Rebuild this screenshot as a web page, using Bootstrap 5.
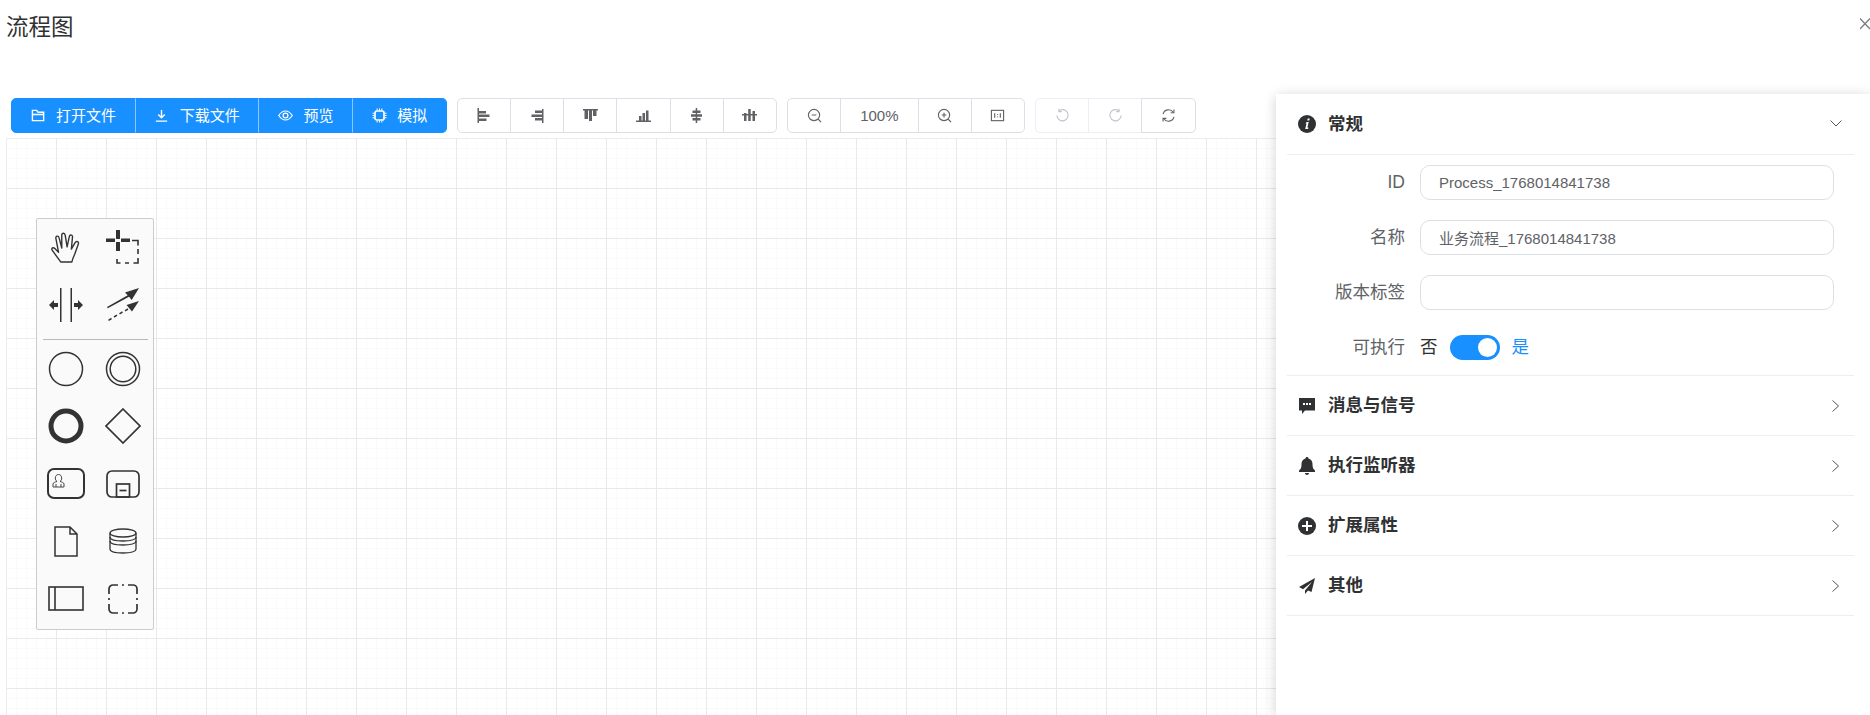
<!DOCTYPE html>
<html lang="zh-CN">
<head>
    <meta charset="UTF-8">
    <title>流程图</title>
    <link href="https://cdn.jsdelivr.net/npm/bootstrap@5.3.0/dist/css/bootstrap.min.css" rel="stylesheet">
    <style>
        html, body {
            height: 715px;
            overflow: hidden;
        }
        body {
            font-family: "Liberation Sans", "Noto Sans CJK SC", sans-serif;
            background: #fff;
            color: #303133;
        }
        .page-title {
            font-size: 22.5px;
            font-weight: 400;
            line-height: 30px;
            margin: 0;
            padding: 13px 0 0 6px;
            height: 98px;
        }
        .close-x {
            position: absolute;
            top: 18px;
            right: 0;
        }
        .tool-row {
            height: 35px;
            padding-left: 11px;
            gap: 10px;
        }
        .tool-row .btn {
            font-size: 15px;
            line-height: 33px;
            height: 35px;
            padding: 0;
            width: 54.2px;
            color: #606266;
            background: #fff;
            border-color: #dcdfe6;
            border-radius: 5px;
            flex: none;
            display: flex;
            align-items: center;
            justify-content: center;
        }
        .tool-row .btn.zoom-val { width: 78.5px; }
        .tool-row .btn.is-off { color: #c0c4cc; border-color: #ebeef5; opacity: 1; }
        .tool-row .btn-primary.main-btn {
            width: auto;
            padding: 0 18.6px;
            color: #fff;
            background: #1890ff;
            border-color: #1890ff;
            border-left-color: #8cc8ff;
            gap: 10.5px;
        }
        .tool-row .btn-primary.main-btn:first-child { border-left-color: #1890ff; }
        .tool-row svg { display: block; }
        .flow-canvas {
            margin: 5px 0 0 6px;
            height: 577px;
            border-top: 1px solid #ececec;
            border-left: 1px solid #ececec;
            background-color: #fff;
            background-image:
                linear-gradient(to right, #e9e9e9 1px, transparent 1px),
                linear-gradient(to bottom, #e9e9e9 1px, transparent 1px),
                linear-gradient(to right, #fafafa 1px, transparent 1px),
                linear-gradient(to bottom, #fafafa 1px, transparent 1px);
            background-size: 50px 50px, 50px 50px, 10px 10px, 10px 10px;
            background-position: -1px -1px;
            position: relative;
        }
        .palette-box {
            position: absolute;
            left: 29px;
            top: 79px;
            width: 118px;
            height: 412px;
            background: #fafafa;
            border: 1px solid #ccc;
            border-radius: 2px;
            padding: 0 1px 0 0;
        }
        .palette-grid {
            display: grid;
            grid-template-columns: 57.5px 57.5px;
            justify-content: center;
            grid-auto-rows: 57.5px;
        }
        .palette-cell {
            display: flex;
            align-items: center;
            justify-content: center;
        }
        .palette-sep {
            border: 0;
            border-top: 1px solid #b9b9b9;
            opacity: 1;
            margin: 5px 4px 0 6px;
        }
        .side-panel {
            position: absolute;
            left: 1276px;
            top: 94px;
            width: 594px;
            height: 621px;
            background: #fff;
            box-shadow: 0 2px 12px rgba(0, 0, 0, .18);
            padding: 0 16px 0 11px;
        }
        .panel-head {
            height: 60px;
            border-bottom: 1px solid #ebeef5;
            font-size: 17.5px;
            font-weight: 700;
            color: #303133;
            padding: 0 15px 0 11px;
            gap: 12px;
        }
        .panel-head .head-arrow { margin-left: auto; }
        .head-first { height: 60.5px; padding-right: 12px; }
        .panel-body {
            height: 221.5px;
            border-bottom: 1px solid #ebeef5;
            padding-top: 10px;
        }
        .prop-row {
            height: 35px;
            margin-bottom: 20px;
        }
        .switch-row { margin-top: 1px; }
        .prop-label {
            width: 118px;
            flex: none;
            text-align: right;
            font-size: 17.5px;
            color: #606266;
            margin-right: 15px;
        }
        .prop-input {
            width: 414px;
            height: 35px;
            font-size: 15px;
            color: #606266;
            padding: 0 18px;
            border-color: #dcdfe6;
            border-radius: 10px;
        }
        .switch-word { font-size: 17.5px; color: #303133; }
        .switch-word.on { color: #1890ff; }
        .switch-track {
            width: 50px;
            height: 25px;
            border-radius: 13px;
            background: #1890ff;
            margin: 0 12px;
            position: relative;
            flex: none;
        }
        .switch-track::after {
            content: "";
            position: absolute;
            top: 3px;
            right: 3px;
            width: 19px;
            height: 19px;
            border-radius: 50%;
            background: #fff;
        }
    </style>
</head>
<body>
    <h1 class="page-title">流程图</h1>
    <svg class="close-x" width="10" height="12" viewBox="0 0 10 12"><path d="M0 .5 10 11M0 11 10 .5" stroke="#7b7d83" stroke-width="1.3" fill="none"/></svg>

    <div class="tool-row d-flex">
        <div class="btn-group">
            <button class="btn btn-primary main-btn"><svg width="15" height="15" viewBox="0 0 16 16" fill="none" stroke="#fff" stroke-width="1.5"><path d="M1.5 13.5V2.5h4.5l1.5 2h6v9z M1.5 7h12"/></svg>打开文件</button>
            <button class="btn btn-primary main-btn"><svg width="15" height="15" viewBox="0 0 16 16" fill="none" stroke="#fff" stroke-width="1.5"><path d="M8 2v8M4.5 7 8 10.5 11.5 7M2 14h12"/></svg>下载文件</button>
            <button class="btn btn-primary main-btn"><svg width="15" height="15" viewBox="0 0 16 16" fill="none" stroke="#fff" stroke-width="1.3"><path d="M.8 8C3 4.6 5.4 3.2 8 3.2s5 1.4 7.2 4.8C13 11.4 10.6 12.8 8 12.8S3 11.4.8 8z"/><circle cx="8" cy="8" r="2.6"/></svg>预览</button>
            <button class="btn btn-primary main-btn"><svg width="15" height="15" viewBox="0 0 16 16" fill="none" stroke="#fff" stroke-width="1.800"><rect x="3.200" y="3.200" width="9.600" height="9.600" rx="2"/><path d="M5.500 .5v2M8 .5v2M10.500 .5v2M5.500 13.500v2M8 13.500v2M10.500 13.500v2M.5 5.500h2M.5 8h2M.5 10.500h2M13.500 5.500h2M13.500 8h2M13.500 10.500h2" stroke-width="1.100"/></svg>模拟</button>
        </div>
        <div class="btn-group">
            <button class="btn"><svg width="15" height="15" viewBox="0 0 15 15" fill="#606266"><path d="M1.500 0H3v15H1.500zM3 3h7v2.500H3zM3 6.500h10.500V9H3zM3 10.500h7.500V13H3z"/></svg></button>
            <button class="btn"><svg width="15" height="15" viewBox="0 0 15 15" fill="#606266"><path d="M12 1h1.500v14H12zM5 2.500h7V5H5zM1.500 6.500H12V9H1.500zM5 10h7v2.500H5z"/></svg></button>
            <button class="btn"><svg width="15" height="15" viewBox="0 0 15 15" fill="#606266"><path d="M0 1h15v1.500H0zM1.500 2.500H5V11H1.500zM6 2.500h3v10.500H6zM10 2.500h3.500V8H10z"/></svg></button>
            <button class="btn"><svg width="15" height="15" viewBox="0 0 15 15" fill="#606266"><path d="M0 12.500h15V14H0zM3 8h2.500v4.500H3zM6.500 5H9v7.500H6.500zM10 2.500h2.500v10H10z"/></svg></button>
            <button class="btn"><svg width="15" height="15" viewBox="0 0 15 15" fill="#606266"><path d="M6.700 0h1.500v15H6.700zM3.500 2.500h8V5h-8zM2 6.200h11v2.500H2zM3.500 10h8v2.500h-8z"/></svg></button>
            <button class="btn"><svg width="15" height="15" viewBox="0 0 15 15" fill="#606266"><path d="M0 6h15v1.500H0zM2 5h2.500v8H2zM6.200 1h2.500v12H6.200zM10.500 3H13v10h-2.500z"/></svg></button>
        </div>
        <div class="btn-group">
            <button class="btn"><svg width="15" height="15" viewBox="0 0 16 16" fill="none" stroke="#606266" stroke-width="1.200"><circle cx="7.500" cy="7.500" r="6"/><path d="M12 12l3 3M5 7.500h5"/></svg></button>
            <button class="btn zoom-val">100%</button>
            <button class="btn"><svg width="15" height="15" viewBox="0 0 16 16" fill="none" stroke="#606266" stroke-width="1.200"><circle cx="7.500" cy="7.500" r="6"/><path d="M12 12l3 3M5 7.500h5M7.500 5v5"/></svg></button>
            <button class="btn"><svg width="15" height="15" viewBox="0 0 16 16" fill="none" stroke="#606266" stroke-width="1.200"><rect x="1.500" y="2.500" width="13" height="11"/><path d="M5 5.500v5M11 5.500v5M8 6.500v.8M8 9v.8"/></svg></button>
        </div>
        <div class="btn-group">
            <button class="btn is-off"><svg width="15" height="15" viewBox="0 0 16 16" fill="none" stroke="#c0c4cc" stroke-width="1.200"><path d="M4 3.200A6 6 0 1 1 2 8M4.200 .8v3h3"/></svg></button>
            <button class="btn is-off"><svg width="15" height="15" viewBox="0 0 16 16" fill="none" stroke="#c0c4cc" stroke-width="1.200"><path d="M12 3.200A6 6 0 1 0 14 8M11.800 .8v3h-3"/></svg></button>
            <button class="btn"><svg width="15" height="15" viewBox="0 0 16 16" fill="none" stroke="#606266" stroke-width="1.200"><path d="M2.200 6.500A6 6 0 0 1 13 4.500M13.800 9.500A6 6 0 0 1 3 11.500"/><path d="M13.800 1.500v3.500h-3.500M2.200 14.500V11h3.500"/></svg></button>
        </div>
    </div>

    <div class="flow-canvas">
        <div class="palette-box">
            <div class="palette-grid">
                <div class="palette-cell"><svg width="31" height="31" viewBox="2 3 27 29" fill="none" stroke="#333" stroke-width="1.300" stroke-linejoin="round" stroke-linecap="round"><path d="M11 31 3 20c-1-2 1-3 2.500-1.500L9 22 6.500 9c-.5-2.500 2.500-3 3-.5L12 18 12 6c0-2.500 3-2.500 3.200 0L17 17 19 7.500c.5-2.500 3.500-2 3 .5L21 19l3.500-6c1.200-2 3.800-.8 3 1.200L24 24c-1 2-2 4-2.500 7z"/></svg></div>
                <div class="palette-cell"><svg width="36" height="36" viewBox="0 0 36 36" fill="#333"><path d="M11 0h4v9h-4zM11 12h4v9h-4zM1 8.500h9v3.500H1zM16 8.500h9v3.500h-9z"/><path d="M27 10.500h6v5M33 19v5M33 28v5h-4.500M24 33h-4M15.500 33H12v-4" fill="none" stroke="#333" stroke-width="1.600"/></svg></div>
                <div class="palette-cell"><svg width="36" height="36" viewBox="0 0 36 36" fill="#333"><path d="M12 1h1.500v34H12zM22.500 1H24v34h-1.500z"/><path d="M1 18l5-5v3h4v4H6v3zM35 18l-5-5v3h-4v4h4v3z"/></svg></div>
                <div class="palette-cell"><svg width="36" height="36" viewBox="0 0 36 36" fill="#333"><path d="M34 1 20 5.500l2.700 2.800L2 20l.8 1.300L24 9.800l2.700 3.200z"/><path d="M34 14l-12.500 4 5.500 6.500z"/><path d="M23 22l-3 1.800M17.500 25l-3 1.800M12 28.200l-3 1.800M6.500 31.500l-3 1.800" stroke="#333" stroke-width="1.500"/></svg></div>
            </div>
            <hr class="palette-sep">
            <div class="palette-grid">
                <div class="palette-cell"><svg width="36" height="36" viewBox="0 0 36 36" fill="none" stroke="#333" stroke-width="1.500"><circle cx="18" cy="18" r="16.500"/></svg></div>
                <div class="palette-cell"><svg width="36" height="36" viewBox="0 0 36 36" fill="none" stroke="#333" stroke-width="1.500"><circle cx="18" cy="18" r="16.500"/><circle cx="18" cy="18" r="12.800"/></svg></div>
                <div class="palette-cell"><svg width="36" height="36" viewBox="0 0 36 36" fill="none" stroke="#333" stroke-width="5"><circle cx="18" cy="18" r="15"/></svg></div>
                <div class="palette-cell"><svg width="36" height="36" viewBox="0 0 36 36" fill="none" stroke="#333" stroke-width="1.700"><path d="M18 1 35 18 18 35 1 18z"/></svg></div>
                <div class="palette-cell"><svg width="38" height="31" viewBox="0 0 38 31" fill="none" stroke="#333"><rect x="1" y="1" width="36" height="29" rx="6" stroke-width="2"/><path d="M6 19v-3c0-1.500 2.500-2 4-2.500-1.300-1-1.700-2-1.700-3.500 0-2 1.300-3.500 3.200-3.500s3.200 1.500 3.200 3.500c0 1.500-.4 2.500-1.700 3.500 1.500.5 4 1 4 2.500v3zM9 19v-3M14 19v-3" stroke-width=".9"/></svg></div>
                <div class="palette-cell"><svg width="34" height="28" viewBox="0 0 34 28" fill="none" stroke="#333" stroke-width="1.700"><rect x="1" y="1" width="32" height="26" rx="5"/><rect x="10.500" y="14" width="13" height="13"/><path d="M13.500 20.500h7"/></svg></div>
                <div class="palette-cell"><svg width="24" height="31" viewBox="0 0 24 31" fill="none" stroke="#333" stroke-width="1.500"><path d="M1 1h15l7 7v22H1zM16 1v7h7"/></svg></div>
                <div class="palette-cell"><svg width="28" height="26" viewBox="0 0 28 26" fill="none" stroke="#333" stroke-width="1.300"><path d="M1 5v16c0 2.500 5.500 4 13 4s13-1.500 13-4V5"/><ellipse cx="14" cy="5" rx="13" ry="4"/><path d="M1 9c0 2.500 5.500 4 13 4s13-1.500 13-4M1 13c0 2.500 5.500 4 13 4s13-1.500 13-4"/></svg></div>
                <div class="palette-cell"><svg width="36" height="25" viewBox="0 0 36 25" fill="none" stroke="#333" stroke-width="1.600"><rect x="1" y="1" width="34" height="23"/><path d="M7 1v23"/></svg></div>
                <div class="palette-cell"><svg width="30" height="30" viewBox="0 0 30 30" fill="none" stroke="#333" stroke-width="1.700"><path d="M10 1H5a4 4 0 0 0-4 4v5M20 1h5a4 4 0 0 1 4 4v5M10 29H5a4 4 0 0 1-4-4v-5M20 29h5a4 4 0 0 0 4-4v-5M14 1h2M14 29h2M1 14v2M29 14v2"/></svg></div>
            </div>
        </div>
    </div>

    <aside class="side-panel">
        <div class="panel-head head-first d-flex align-items-center">
            <svg width="18" height="18" viewBox="0 0 18 18"><circle cx="9" cy="9" r="9" fill="#303133"/><path d="M9.700 3.500h2l-.4 2h-2zM8.700 7h2l-1.300 5.500h1l-.3 1.500H7.200l1.300-5.500h-1z" fill="#fff"/></svg>
            <span>常规</span>
            <svg class="head-arrow" width="12" height="7" viewBox="0 0 12 7" fill="none" stroke="#555"><path d="M.5.5 6 6 11.500.5"/></svg>
        </div>
        <div class="panel-body">
            <div class="prop-row d-flex align-items-center">
                <label class="prop-label">ID</label>
                <input class="form-control prop-input" value="Process_1768014841738">
            </div>
            <div class="prop-row d-flex align-items-center">
                <label class="prop-label">名称</label>
                <input class="form-control prop-input" value="业务流程_1768014841738">
            </div>
            <div class="prop-row d-flex align-items-center">
                <label class="prop-label">版本标签</label>
                <input class="form-control prop-input" value="">
            </div>
            <div class="prop-row switch-row d-flex align-items-center">
                <label class="prop-label">可执行</label>
                <span class="switch-word">否</span>
                <span class="switch-track"></span>
                <span class="switch-word on">是</span>
            </div>
        </div>
        <div class="panel-head d-flex align-items-center">
            <svg width="18" height="18" viewBox="0 0 18 18"><path d="M1 1h16v12.500H7L4 17v-3.500H1z" fill="#303133"/><path d="M5 6h2v2H5zM8 6h2v2H8zM11 6h2v2h-2z" fill="#fff"/></svg>
            <span>消息与信号</span>
            <svg class="head-arrow" width="7" height="12" viewBox="0 0 7 12" fill="none" stroke="#555"><path d="M.5.5 6.500 6 .5 11.500"/></svg>
        </div>
        <div class="panel-head d-flex align-items-center">
            <svg width="18" height="18" viewBox="0 0 18 18" fill="#303133"><path d="M9 0c1 0 1.500.6 1.500 1.500C13 2.200 14.500 4.200 14.500 7c0 3.500.5 5 2.500 6.500V15H1v-1.500C3 12 3.500 10.500 3.500 7c0-2.800 1.500-4.800 4-5.500C7.500.6 8 0 9 0zM7 16h4c0 1-1 2-2 2s-2-1-2-2z"/></svg>
            <span>执行监听器</span>
            <svg class="head-arrow" width="7" height="12" viewBox="0 0 7 12" fill="none" stroke="#555"><path d="M.5.5 6.500 6 .5 11.500"/></svg>
        </div>
        <div class="panel-head d-flex align-items-center">
            <svg width="18" height="18" viewBox="0 0 18 18"><circle cx="9" cy="9" r="9" fill="#303133"/><path d="M8 4h2v4h4v2h-4v4H8v-4H4V8h4z" fill="#fff"/></svg>
            <span>扩展属性</span>
            <svg class="head-arrow" width="7" height="12" viewBox="0 0 7 12" fill="none" stroke="#555"><path d="M.5.5 6.500 6 .5 11.500"/></svg>
        </div>
        <div class="panel-head d-flex align-items-center">
            <svg width="18" height="18" viewBox="0 0 18 18" fill="#303133"><path d="M17 1 1 10l4 2.200L14 5l-7 8.500V17l3-3.500 3.500 1.500z"/></svg>
            <span>其他</span>
            <svg class="head-arrow" width="7" height="12" viewBox="0 0 7 12" fill="none" stroke="#555"><path d="M.5.5 6.500 6 .5 11.500"/></svg>
        </div>
    </aside>

    <script src="https://cdn.jsdelivr.net/npm/bootstrap@5.3.0/dist/js/bootstrap.bundle.min.js"></script>
</body>
</html>
